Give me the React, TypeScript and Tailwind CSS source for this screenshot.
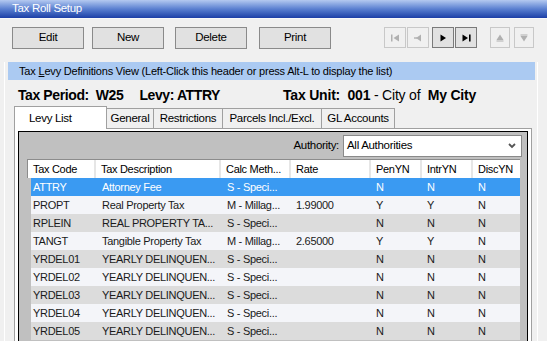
import React from 'react'

type Row = { code: string; desc: string; calc: string; rate: string; pen: string; intr: string; disc: string }

const rows: Row[] = [
  { code: 'ATTRY', desc: 'Attorney Fee', calc: 'S - Speci...', rate: '', pen: 'N', intr: 'N', disc: 'N' },
  { code: 'PROPT', desc: 'Real Property Tax', calc: 'M - Millag...', rate: '1.99000', pen: 'Y', intr: 'Y', disc: 'N' },
  { code: 'RPLEIN', desc: 'REAL PROPERTY TA...', calc: 'S - Speci...', rate: '', pen: 'N', intr: 'N', disc: 'N' },
  { code: 'TANGT', desc: 'Tangible Property Tax', calc: 'M - Millag...', rate: '2.65000', pen: 'Y', intr: 'Y', disc: 'N' },
  { code: 'YRDEL01', desc: 'YEARLY DELINQUEN...', calc: 'S - Speci...', rate: '', pen: 'N', intr: 'N', disc: 'N' },
  { code: 'YRDEL02', desc: 'YEARLY DELINQUEN...', calc: 'S - Speci...', rate: '', pen: 'N', intr: 'N', disc: 'N' },
  { code: 'YRDEL03', desc: 'YEARLY DELINQUEN...', calc: 'S - Speci...', rate: '', pen: 'N', intr: 'N', disc: 'N' },
  { code: 'YRDEL04', desc: 'YEARLY DELINQUEN...', calc: 'S - Speci...', rate: '', pen: 'N', intr: 'N', disc: 'N' },
  { code: 'YRDEL05', desc: 'YEARLY DELINQUEN...', calc: 'S - Speci...', rate: '', pen: 'N', intr: 'N', disc: 'N' },
]

function ToolButton({ label, className }: { label: string; className?: string }) {
  return (
    <button className={`h-[22px] w-[72px] border border-[#8a8a8a] bg-[#e1e1e1] text-[11.5px] tracking-[-0.3px] text-black ${className ?? ''}`}>
      {label}
    </button>
  )
}

function NavButton({ enabled, children, w = 'w-[22px]' }: { enabled: boolean; children: React.ReactNode; w?: string }) {
  return (
    <div
      className={`${w} h-[21px] flex items-center justify-center border ${
        enabled ? 'border-[#7a7a7a] bg-[#e1e1e1] text-black' : 'border-[#c8c8c8] bg-[#f0f0f0] text-[#b0b0b0]'
      }`}
    >
      {children}
    </div>
  )
}

const cols = [
  { key: 'code', label: 'Tax Code', w: 'w-[68px]' },
  { key: 'desc', label: 'Tax Description', w: 'w-[125px]' },
  { key: 'calc', label: 'Calc Meth...', w: 'w-[70px]' },
  { key: 'rate', label: 'Rate', w: 'w-[80px]' },
  { key: 'pen', label: 'PenYN', w: 'w-[51px]' },
  { key: 'intr', label: 'IntrYN', w: 'w-[51px]' },
  { key: 'disc', label: 'DiscYN', w: 'w-[47px]' },
] as const

export default function App() {
  return (
    <div className="w-[547px] h-[341px] overflow-hidden bg-[#f0f0f0] text-black font-['Liberation_Sans',Arial,sans-serif]">
      {/* Title bar */}
      <div className="h-[19px] border-b border-[#f8f8f8] bg-gradient-to-b from-[#b4c9f0] via-[#5a7fd0] to-[#1d3ea6] pl-[12px] flex items-center text-white text-[11.5px] tracking-[-0.3px]">
        Tax Roll Setup
      </div>

      {/* Toolbar */}
      <div className="h-[43px] flex items-start pt-[8px] pl-[12px]">
        <ToolButton label="Edit" />
        <ToolButton label="New" className="ml-[8px]" />
        <ToolButton label="Delete" className="ml-[11px]" />
        <ToolButton label="Print" className="ml-[12px]" />

        <div className="ml-[53px] flex gap-[1px]">
          <NavButton enabled={false}>
            <svg width="9" height="8" viewBox="0 0 9 8"><rect x="0" y="0.5" width="1.5" height="7" fill="currentColor" /><path d="M8 0.5 L2.5 4 L8 7.5 Z" fill="currentColor" /></svg>
          </NavButton>
          <NavButton enabled={false}>
            <svg width="8" height="8" viewBox="0 0 8 8"><rect x="0" y="3.3" width="3" height="1.4" fill="currentColor" /><path d="M7 0.5 L2 4 L7 7.5 Z" fill="currentColor" /></svg>
          </NavButton>
          <div className="w-[1px]" />
          <NavButton enabled>
            <svg width="8" height="8" viewBox="0 0 8 8"><path d="M1.5 0.5 L7 4 L1.5 7.5 Z" fill="currentColor" /></svg>
          </NavButton>
          <NavButton enabled>
            <svg width="9" height="8" viewBox="0 0 9 8"><path d="M0.5 0.5 L6 4 L0.5 7.5 Z" fill="currentColor" /><rect x="7" y="0.5" width="1.6" height="7" fill="currentColor" /></svg>
          </NavButton>
        </div>

        <div className="ml-[13px] flex gap-[4px]">
          <NavButton enabled={false} w="w-[20px]">
            <svg width="8" height="8" viewBox="0 0 8 8"><path d="M4 0.5 L7.5 6 L0.5 6 Z" fill="currentColor" /><rect x="0.5" y="6.5" width="7" height="1" fill="currentColor" /></svg>
          </NavButton>
          <NavButton enabled={false} w="w-[20px]">
            <svg width="8" height="8" viewBox="0 0 8 8"><rect x="0.5" y="0.5" width="7" height="1" fill="currentColor" /><path d="M0.5 2 L7.5 2 L4 7.5 Z" fill="currentColor" /></svg>
          </NavButton>
        </div>
      </div>

      {/* Framed content */}
      <div className="ml-[4px] w-[534px] border-l border-r border-white">
        {/* View header */}
        <div className="ml-[3px] w-[527px] h-[18px] bg-[#abcaf2] flex items-center pl-[11px] text-[11px] tracking-[-0.2px]">
          Tax <span className="underline underline-offset-[1px] mx-[3px]">L</span>
          <span className="-ml-[3px]">evy Definitions View (Left-Click this header or press Alt-L to display the list)</span>
        </div>

        {/* Period / Levy / Unit */}
        <div className="h-[26px] flex items-end pl-[13px] pb-[1px] text-[14px] leading-[20px] whitespace-pre">
          <div className="w-[265px] font-bold tracking-[-0.4px]">
            Tax Period:  W25<span className="ml-[16px]">Levy: ATTRY</span>
          </div>
          <div className="tracking-[-0.2px]">
            <span className="font-bold">Tax Unit:</span>  <span className="font-bold">001</span> - City of  <span className="font-bold">My City</span>
          </div>
        </div>

        {/* Tabs */}
        <div className="h-[22px] flex items-end pl-[9px] text-[11.5px] tracking-[-0.3px]">
          <div className="relative z-10 -mb-[1px] w-[93px] h-[23px] border border-b-0 border-[#a0a0a0] bg-white pl-[14px] pt-[3px]">
            Levy List
          </div>
          <div className="w-[47px] h-[20px] border border-b-0 border-l-0 border-[#a0a0a0] flex items-center justify-center">General</div>
          <div className="w-[69px] h-[20px] border border-b-0 border-l-0 border-[#a0a0a0] flex items-center justify-center">Restrictions</div>
          <div className="w-[99px] h-[20px] border border-b-0 border-l-0 border-[#a0a0a0] flex items-center justify-center">Parcels Incl./Excl.</div>
          <div className="w-[73px] h-[20px] border border-b-0 border-l-0 border-[#a0a0a0] flex items-center justify-center">GL Accounts</div>
        </div>

        {/* Tab panel */}
        <div className="ml-[9px] w-[518px] h-[220px] border border-[#a0a0a0] bg-white px-[3px] pt-[2px]">
          <div className="h-full border border-black bg-[#c0c0c0]">
            {/* Authority filter */}
            <div className="flex items-center justify-end pt-[3px] pr-[5px] text-[11.5px] tracking-[-0.3px]">
              <span className="mr-[4px]">Authority:</span>
              <div className="w-[179px] h-[22px] border border-[#8a8a8a] bg-white flex items-center pl-[3px] pr-[5px]">
                <span className="flex-1">All Authorities</span>
                <svg width="8" height="6" viewBox="0 0 8 6"><path d="M1 1 L4 4 L7 1" stroke="#555" strokeWidth="1.8" fill="none" /></svg>
              </div>
            </div>

            {/* Grid */}
            <div className="ml-[8px] mt-[2px] w-[493px] text-[11px] tracking-[-0.3px]">
              <div className="flex h-[19px] border-t border-l border-[#8c8c8c] bg-white">
                {cols.map((c, i) => (
                  <div
                    key={c.key}
                    className={`${c.w} h-full flex items-center pl-[5px] ${i < cols.length - 1 ? 'border-r-2 border-[#e6e6e6]' : ''}`}
                  >
                    {c.label}
                  </div>
                ))}
              </div>
              {rows.map((r, i) => {
                const bg = i === 0 ? 'bg-[#3a9af2] text-white' : i % 2 === 1 ? 'bg-[#f4f5f9] text-[#1a1a1a]' : 'bg-[#dcdcdc] text-[#1a1a1a]'
                return (
                  <div key={r.code} className="flex h-[18px] pl-[4px]">
                    <div className={`flex flex-1 items-center ${bg}`}>
                      <div className="w-[64px] pl-[2px]">{r.code}</div>
                      <div className="w-[125px] pl-[7px]">{r.desc}</div>
                      <div className="w-[70px] pl-[7px]">{r.calc}</div>
                      <div className="w-[80px] pl-[6px]">{r.rate}</div>
                      <div className="w-[51px] pl-[6px]">{r.pen}</div>
                      <div className="w-[51px] pl-[6px]">{r.intr}</div>
                      <div className="w-[47px] pl-[6px]">{r.disc}</div>
                    </div>
                  </div>
                )
              })}
            </div>
          </div>
        </div>
      </div>
    </div>
  )
}
